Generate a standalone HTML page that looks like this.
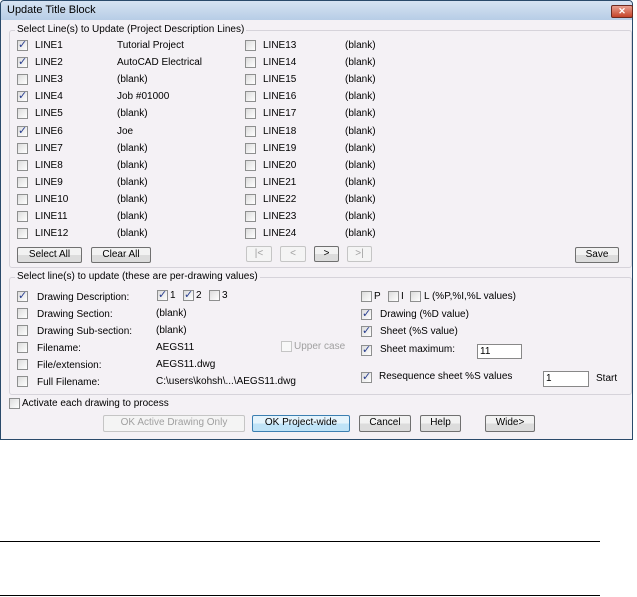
<!DOCTYPE html>
<html><head><style>
body{margin:0;width:637px;height:597px;background:#fff;font-family:"Liberation Sans",sans-serif;font-size:10px;color:#000;position:relative;overflow:hidden}
.a{position:absolute;white-space:nowrap}
#dlg{position:absolute;left:0;top:0;width:631px;height:438px;border:1px solid #2a4a6a;background:#f4f1f5;border-radius:4px 4px 0 0}
#tb{position:absolute;left:0;top:0;width:631px;height:19px;background:linear-gradient(#d6e3f2,#b7cde6);border-radius:4px 4px 0 0}
.grp{position:absolute;border:1px solid #d6d3da;border-radius:3px}
.cb{position:absolute;width:9px;height:9px;border:1px solid #8e8f8f;background:linear-gradient(135deg,#dcdcdc,#fff)}
.cb.c::after{content:"✓";position:absolute;left:0;top:-3px;font-size:11px;color:#2a3f8f;font-family:"DejaVu Sans",sans-serif}
.btn{position:absolute;border:1px solid #707070;border-radius:2px;background:linear-gradient(#f2f2f2 50%,#dcdcdc 50%);text-align:center;line-height:14px;box-sizing:border-box;height:16px}
.dis{border-color:#c5c5c5;color:#a0a0a0;background:#f4f4f4}
.inp{position:absolute;border:1px solid #888;background:#fff;box-sizing:border-box;padding-left:2px;line-height:13px}
.hl{position:absolute;left:0;width:600px;height:1px;background:#000}
</style></head><body>
<div id="dlg">
<div id="tb"></div>
<div class="a" style="left:6px;top:3px;font-size:11px">Update Title Block</div>
<div style="position:absolute;left:610px;top:4px;width:20px;height:11px;border:1px solid #6b2a20;border-radius:2px;background:linear-gradient(#e8a090,#c5442a);color:#fff;font-size:9px;text-align:center;line-height:11px;font-weight:bold">✕</div>
<div class="grp" style="left:8px;top:29px;width:621px;height:236px"></div>
<div class="a" style="left:14px;top:23px;background:#f4f1f5;padding:0 2px">Select Line(s) to Update (Project Description Lines)</div>
<div class="grp" style="left:8px;top:276px;width:621px;height:116px"></div>
<div class="a" style="left:14px;top:270px;background:#f4f1f5;padding:0 2px">Select line(s) to update (these are per-drawing values)</div>
</div>
<div id="rows"></div>
<div class="btn" style="left:17px;top:247px;width:65px">Select All</div>
<div class="btn" style="left:91px;top:247px;width:60px">Clear All</div>
<div class="btn dis" style="left:246px;top:246px;width:26px">|&lt;</div>
<div class="btn dis" style="left:280px;top:246px;width:26px">&lt;</div>
<div class="btn" style="left:314px;top:246px;width:25px">&gt;</div>
<div class="btn dis" style="left:347px;top:246px;width:25px">&gt;|</div>
<div class="btn" style="left:575px;top:247px;width:44px">Save</div>

<div class="cb c" style="left:17px;top:291px"></div><div class="a" style="left:37px;top:292px">Drawing Description:</div>
<div class="cb c" style="left:157px;top:290px"></div><div class="a" style="left:170px;top:290px">1</div>
<div class="cb c" style="left:183px;top:290px"></div><div class="a" style="left:196px;top:290px">2</div>
<div class="cb" style="left:209px;top:290px"></div><div class="a" style="left:222px;top:290px">3</div>
<div class="cb" style="left:17px;top:308px"></div><div class="a" style="left:37px;top:309px">Drawing Section:</div><div class="a" style="left:156px;top:308px">(blank)</div>
<div class="cb" style="left:17px;top:325px"></div><div class="a" style="left:37px;top:326px">Drawing Sub-section:</div><div class="a" style="left:156px;top:325px">(blank)</div>
<div class="cb" style="left:17px;top:342px"></div><div class="a" style="left:37px;top:343px">Filename:</div><div class="a" style="left:156px;top:342px">AEGS11</div>
<div class="cb" style="left:17px;top:359px"></div><div class="a" style="left:37px;top:360px">File/extension:</div><div class="a" style="left:156px;top:359px">AEGS11.dwg</div>
<div class="cb" style="left:17px;top:376px"></div><div class="a" style="left:37px;top:377px">Full Filename:</div><div class="a" style="left:156px;top:376px">C:\users\kohsh\...\AEGS11.dwg</div>
<div class="cb" style="left:281px;top:341px;border-color:#c5c5c5;background:#f8f8f8"></div><div class="a" style="left:294px;top:341px;color:#a0a0a0">Upper case</div>

<div class="cb" style="left:361px;top:291px"></div><div class="a" style="left:374px;top:291px">P</div>
<div class="cb" style="left:388px;top:291px"></div><div class="a" style="left:401px;top:291px">I</div>
<div class="cb" style="left:410px;top:291px"></div><div class="a" style="left:424px;top:291px">L (%P,%I,%L values)</div>
<div class="cb c" style="left:361px;top:309px"></div><div class="a" style="left:380px;top:309px">Drawing (%D value)</div>
<div class="cb c" style="left:361px;top:326px"></div><div class="a" style="left:380px;top:326px">Sheet (%S value)</div>
<div class="cb c" style="left:361px;top:345px"></div><div class="a" style="left:380px;top:344px">Sheet maximum:</div>
<div class="inp" style="left:477px;top:344px;width:45px;height:15px">11</div>
<div class="cb c" style="left:361px;top:372px"></div><div class="a" style="left:379px;top:371px">Resequence sheet %S values</div>
<div class="inp" style="left:543px;top:371px;width:46px;height:16px">1</div>
<div class="a" style="left:596px;top:373px">Start</div>

<div class="cb" style="left:9px;top:398px"></div><div class="a" style="left:22px;top:398px">Activate each drawing to process</div>
<div class="btn dis" style="left:103px;top:415px;width:142px;height:17px">OK Active Drawing Only</div>
<div class="btn" style="left:252px;top:415px;width:98px;height:17px;border-color:#3c7fb1;background:linear-gradient(#e5f4fc 50%,#bfe3f7 50%)">OK Project-wide</div>
<div class="btn" style="left:359px;top:415px;width:52px;height:17px">Cancel</div>
<div class="btn" style="left:420px;top:415px;width:41px;height:17px">Help</div>
<div class="btn" style="left:485px;top:415px;width:50px;height:17px">Wide&gt;</div>

<div class="hl" style="top:541px"></div>
<div class="hl" style="top:595px"></div>
<script>
var L=[["Tutorial Project",1],["AutoCAD Electrical",1],["(blank)",0],["Job #01000",1],["(blank)",0],["Joe",1],["(blank)",0],["(blank)",0],["(blank)",0],["(blank)",0],["(blank)",0],["(blank)",0]];
var h="";
for(var i=0;i<12;i++){var y=40+i*17.1;
h+='<div class="cb'+(L[i][1]?' c':'')+'" style="left:17px;top:'+y+'px"></div><div class="a" style="left:35px;top:'+y+'px">LINE'+(i+1)+'</div><div class="a" style="left:117px;top:'+y+'px">'+L[i][0]+'</div>';
h+='<div class="cb" style="left:245px;top:'+y+'px"></div><div class="a" style="left:263px;top:'+y+'px">LINE'+(i+13)+'</div><div class="a" style="left:345px;top:'+y+'px">(blank)</div>';}
document.getElementById("rows").innerHTML=h;
</script>
</body></html>
